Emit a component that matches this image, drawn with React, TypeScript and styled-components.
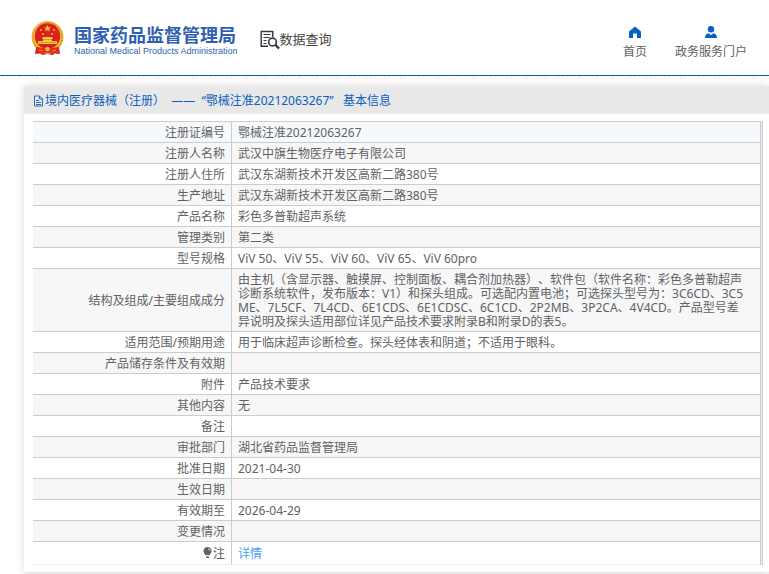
import React from "react";
import styled, { createGlobalStyle } from "styled-components";

const GlobalStyle = createGlobalStyle`
  *, *::before, *::after { box-sizing: border-box; }
  body {
    margin: 0;
    background: #fff;
    color: #606266;
    font: 12px/14px "Noto Sans", "Noto Sans CJK SC", sans-serif;
    text-spacing-trim: space-all;
    overflow-x: hidden;
  }
`;

const Header = styled.header`
  display: flex;
  align-items: flex-start;
  height: 76px;
  padding: 20px 22px 0 31px;
  border-bottom: 1px solid #0f5cb5;
`;

const Brand = styled.a`
  display: flex;
  gap: 10px;
  color: #2f5fb0;
  text-decoration: none;
`;

const Emblem = styled.svg`
  width: 33px;
  height: 36px;
`;

const BrandText = styled.div`
  display: flex;
  flex-direction: column;
  padding-top: 3px;
  white-space: nowrap;
`;

const BrandName = styled.strong`
  font: 700 18px/22px "Noto Sans CJK SC", sans-serif;
`;

const BrandEnglish = styled.span`
  font: 9px/12px "Liberation Sans", sans-serif;
`;

const Section = styled.div`
  display: flex;
  align-items: center;
  margin: 9px 0 0 22px;
  color: #444;
  font: 13px/20px "Noto Sans CJK SC", sans-serif;
  white-space: nowrap;
`;

const Nav = styled.nav`
  display: flex;
  gap: 28px;
  margin-left: auto;
`;

const NavLink = styled.a`
  display: flex;
  flex-direction: column;
  align-items: center;
  gap: 3px;
  padding-top: 4px;
  color: #606266;
  line-height: 18px;
  text-decoration: none;
  white-space: nowrap;
`;

const Strip = styled.div`
  height: 3px;
  background: repeating-linear-gradient(135deg, #fff 0 2px, #f0eaec 2px 3px);
`;

const Panel = styled.main`
  margin: 7px 0 1px 24px;
  padding-bottom: 7px;
  border-bottom: 1px solid #e4e4e4;
  box-shadow: 0 0 8px rgba(0, 0, 0, 0.14);
`;

const PanelTitle = styled.h1`
  display: flex;
  align-items: center;
  gap: 1px;
  height: 28px;
  margin: 0;
  padding: 2px 9px 0;
  border-bottom: 1px solid #ebeef5;
  background: #e8e8e8;
  color: #0d5ebd;
  font-size: 12px;
  font-weight: 400;
  white-space: pre;
`;

const TableFrame = styled.div`
  margin: 7px 6px 0 9px;
  padding-right: 1px;
  border-right: 1px solid #ccc;
  background: #ebeef5;
`;

const Table = styled.table`
  width: 100%;
  table-layout: fixed;
  border-spacing: 0;
  border-top: 1px solid #ccc;
  border-right: 1px solid #ccc;
  background: #fff;
`;

const LabelCol = styled.col`
  width: 199px;
`;

const Row = styled.tr<{ $tone: string; $last: boolean }>`
  background: ${(p) => p.$tone};
  th, td {
    padding-top: ${(p) => (p.$last ? 5 : 4)}px;
    padding-bottom: ${(p) => (p.$last ? 3 : 2)}px;
    border-bottom: 1px solid ${(p) => (p.$last ? "#ebeef5" : "#ccc")};
  }
`;

const Label = styled.th`
  padding: 0 6px;
  border-right: 1px solid #ccc;
  font-weight: 400;
  text-align: right;
  svg { vertical-align: -1px; }
`;

const Value = styled.td`
  height: 21px;
  padding: 0 10px 0 6px;
  text-align: left;
  word-break: break-all;
`;

const DetailLink = styled.a`
  color: #409eff;
  text-decoration: none;
`;

const rows: [string, string][] = [
  ["注册证编号", "鄂械注准20212063267"],
  ["注册人名称", "武汉中旗生物医疗电子有限公司"],
  ["注册人住所", "武汉东湖新技术开发区高新二路380号"],
  ["生产地址", "武汉东湖新技术开发区高新二路380号"],
  ["产品名称", "彩色多普勒超声系统"],
  ["管理类别", "第二类"],
  ["型号规格", "ViV 50、ViV 55、ViV 60、ViV 65、ViV 60pro"],
  [
    "结构及组成/主要组成成分",
    "由主机（含显示器、触摸屏、控制面板、耦合剂加热器）、软件包（软件名称：彩色多普勒超声诊断系统软件，发布版本：V1）和探头组成。可选配内置电池；可选探头型号为：3C6CD、3C5ME、7L5CF、7L4CD、6E1CDS、6E1CDSC、6C1CD、2P2MB、3P2CA、4V4CD。产品型号差异说明及探头适用部位详见产品技术要求附录B和附录D的表5。",
  ],
  ["适用范围/预期用途", "用于临床超声诊断检查。探头经体表和阴道；不适用于眼科。"],
  ["产品储存条件及有效期", ""],
  ["附件", "产品技术要求"],
  ["其他内容", "无"],
  ["备注", ""],
  ["审批部门", "湖北省药品监督管理局"],
  ["批准日期", "2021-04-30"],
  ["生效日期", ""],
  ["有效期至", "2026-04-29"],
  ["变更情况", ""],
];

const tone = (i: number) => (i === 0 ? "#f5f9fc" : i % 2 ? "#f7f7f7" : "#fff");

const NationalEmblem = () => (
  <Emblem viewBox="0 0 33 36" aria-hidden="true">
    <path d="M5 27 4 34l5-1 2 2 5-2 6 2 2-2 5 1-1-8z" fill="#d9231c" />
    <circle cx="16.500" cy="17" r="16" fill="#eeb63c" />
    <circle cx="16.500" cy="17" r="14.500" fill="none" stroke="#d98a22" strokeWidth="1" strokeDasharray="2 1" />
    <circle cx="16.500" cy="16" r="12.700" fill="#dc1f19" />
    <path d="m16.500 5 1 2.200 2.500.2-1.900 1.600.6 2.400-2.200-1.300-2.200 1.300.6-2.400L13 7.400l2.500-.2z" fill="#f5c542" />
    <g fill="#f5c542">
      <circle cx="10" cy="10" r="1" />
      <circle cx="23" cy="10" r="1" />
      <circle cx="12" cy="14" r="1" />
      <circle cx="21" cy="14" r="1" />
      <path d="M12 17h9l1 2h-1v2h5v3H7v-3h5v-2h-1z" />
    </g>
    <path d="M8 22.500h17M12 19.500h9" stroke="#d88b22" strokeWidth=".7" />
    <path d="M5 27l8 1 3.500 2 3.500-2 8-1-1 7-4-1-3 2-3.500-1.500L13 35l-3-2-4 1z" fill="#dc2a1c" />
    <circle cx="16.500" cy="29" r="2.300" fill="#eeb63c" />
    <path d="M8 30l4 1M25 30l-4 1M13 33h7" stroke="#eeb63c" strokeWidth=".8" />
  </Emblem>
);

const SearchDocIcon = () => (
  <svg width="20" height="20" viewBox="0 0 20 20" fill="none" stroke="#34344a" aria-hidden="true">
    <path d="M8 17.200H1.200V2.500h11.600V8" strokeWidth="1.400" />
    <path d="M3.500 5.500h7M3.500 8.500h6M3.500 11.500h3M3.500 14.500h3" strokeWidth="1.200" />
    <circle cx="12.500" cy="13" r="3.900" strokeWidth="1.600" />
    <path d="m15.500 16 3.500 3.500" strokeWidth="2.400" />
  </svg>
);

const HomeIcon = () => (
  <svg width="14" height="16" viewBox="0 0 14 16" fill="#0b5fc4" aria-hidden="true">
    <path d="M7 2.500 1 7.500V13.500q0 .5.500.5H5V9.500h4V14h3.500q.5 0 .5-.5v-6z" />
  </svg>
);

const UserIcon = () => (
  <svg width="14" height="16" viewBox="0 0 14 16" fill="#0b5fc4" aria-hidden="true">
    <circle cx="7" cy="5.200" r="3.200" />
    <path d="M1 14q0-4.300 3.800-4.800L7 11.300l2.200-2.100Q13 9.700 13 14z" />
  </svg>
);

const DocIcon = () => (
  <svg width="11" height="12" viewBox="0 0 11 12" fill="none" stroke="#0d5ebd" aria-hidden="true">
    <path d="M1.500 1h5L9.500 4v7h-8zM6.500 1v3h3M3 5.500h3M3 7.500h5M3 9.500h5" strokeWidth=".9" />
  </svg>
);

const BulbIcon = () => (
  <svg width="11" height="12" viewBox="0 0 11 12" aria-hidden="true">
    <path d="M5.500 0a4 4 0 0 1 4 4.200c0 2-1.500 2.800-2.200 4H3.700C3 7 1.500 6.200 1.500 4.200a4 4 0 0 1 4-4.200M4 9.500h3V11H4z" fill="#606266" />
    <path d="M6 1.800q2 .3 2 2" fill="none" stroke="#fff" strokeWidth=".8" />
  </svg>
);

export default function App() {
  return (
    <>
      <GlobalStyle />
      <Header>
        <Brand href="#">
          <NationalEmblem />
          <BrandText>
            <BrandName>国家药品监督管理局</BrandName>
            <BrandEnglish>National Medical Products Administration</BrandEnglish>
          </BrandText>
        </Brand>
        <Section>
          <SearchDocIcon />
          数据查询
        </Section>
        <Nav>
          <NavLink href="#"><HomeIcon />首页</NavLink>
          <NavLink href="#"><UserIcon />政务服务门户</NavLink>
        </Nav>
      </Header>
      <Strip />
      <Panel>
        <PanelTitle>
          <DocIcon />
          <span>境内医疗器械（注册）  ——  “鄂械注准20212063267”   基本信息</span>
        </PanelTitle>
        <TableFrame>
          <Table>
            <colgroup>
              <LabelCol />
              <col />
            </colgroup>
            <tbody>
              {rows.map(([label, value], i) => (
                <Row key={label} $tone={tone(i)} $last={false}>
                  <Label scope="row">{label}</Label>
                  <Value>{value}</Value>
                </Row>
              ))}
              <Row $tone="#fff" $last>
                <Label scope="row"><BulbIcon />注</Label>
                <Value><DetailLink href="#">详情</DetailLink></Value>
              </Row>
            </tbody>
          </Table>
        </TableFrame>
      </Panel>
    </>
  );
}
